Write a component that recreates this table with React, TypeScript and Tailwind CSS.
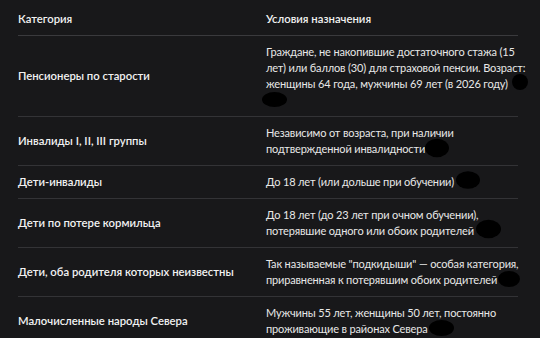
import React from "react";

const Blob = ({ className = "" }: { className?: string }) => (
  <span className={"inline-block align-top bg-black rounded-[50%] " + className} />
);

type Row = { cat: string; body: React.ReactNode };

const rows: Row[] = [
  {
    cat: "Пенсионеры по старости",
    body: (
      <>
        Граждане, не накопившие достаточного стажа (15
        <br />
        лет) или баллов (30) для страховой пенсии. Возраст:
        <br />
        женщины 64 года, мужчины 69 лет (в 2026 году)
        <Blob className="w-[16px] h-[16px] ml-[4px] -translate-y-[2px]" />
        <br />
        <Blob className="w-[25px] h-[15px] -ml-[4px]" />
      </>
    ),
  },
  {
    cat: "Инвалиды I, II, III группы",
    body: (
      <>
        Независимо от возраста, при наличии
        <br />
        подтвержденной инвалидности
        <Blob className="w-[24px] h-[16px] scale-y-[1.15] -translate-y-[1px]" />
      </>
    ),
  },
  {
    cat: "Дети-инвалиды",
    body: (
      <>
        До 18 лет (или дольше при обучении)
        <Blob className="w-[24px] h-[16px] ml-[2px] scale-y-[1.1] -translate-y-[2px]" />
      </>
    ),
  },
  {
    cat: "Дети по потере кормильца",
    body: (
      <>
        До 18 лет (до 23 лет при очном обучении),
        <br />
        потерявшие одного или обоих родителей
        <Blob className="w-[25px] h-[16px] ml-[2px] scale-y-[1.15] -translate-y-[2px]" />
      </>
    ),
  },
  {
    cat: "Дети, оба родителя которых неизвестны",
    body: (
      <>
        Так называемые "подкидыши" — особая категория,
        <br />
        приравненная к потерявшим обоих родителей
        <Blob className="w-[22px] h-[16px] ml-[1px] -translate-y-[1px]" />
      </>
    ),
  },
  {
    cat: "Малочисленные народы Севера",
    body: (
      <>
        Мужчины 55 лет, женщины 50 лет, постоянно
        <br />
        проживающие в районах Севера
        <Blob className="w-[25px] h-[16px] ml-[1px] -translate-y-[1px]" />
      </>
    ),
  },
];

export default function App() {
  return (
    <div
      className="w-[540px] h-[338px] overflow-hidden bg-[#18181a] text-[#ececec] text-[11px] leading-[16px]"
      style={{ fontFamily: 'Lato, "Noto Sans", sans-serif' }}
    >
      <div className="ml-[18px] w-[500px] pt-[11px]">
        <div className="grid grid-cols-[248px_252px] border-b border-[#3a3a3d] pb-[8px] font-semibold text-[11.3px] text-[#f0f0f0]">
          <div>Категория</div>
          <div>Условия назначения</div>
        </div>
        {rows.map((r, i) => (
          <div
            key={i}
            className="grid grid-cols-[248px_252px] items-center border-b border-[#333336] py-[8px]"
          >
            <div className="font-semibold text-[11.3px] text-[#f2f2f2]">{r.cat}</div>
            <div className="whitespace-nowrap tracking-[-0.15px] text-[#e8e8e8]">{r.body}</div>
          </div>
        ))}
      </div>
    </div>
  );
}
